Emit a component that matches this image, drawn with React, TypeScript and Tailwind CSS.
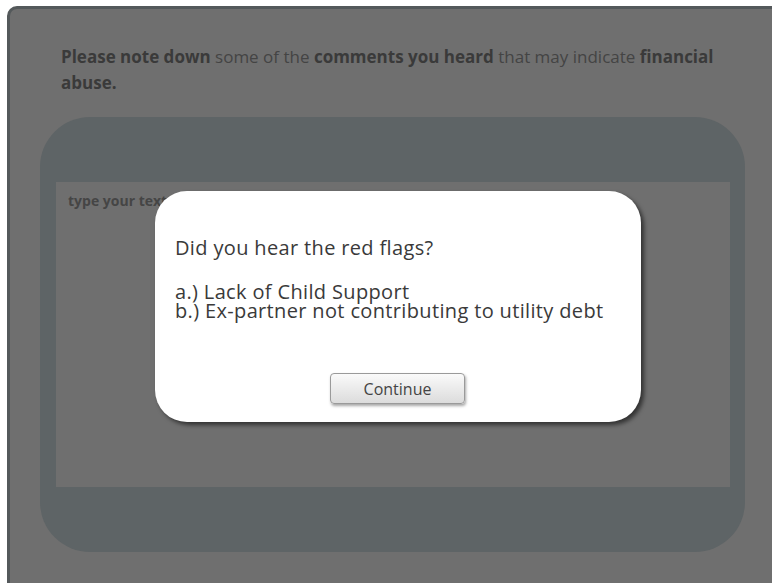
export default function App() {
  return (
    <div
      className="relative h-[583px] w-[772px] overflow-hidden bg-white pl-[7px] pt-[6px]"
      style={{ fontFamily: '"Open Sans", "Noto Sans", sans-serif' }}
    >
      {/* activity frame, dimmed behind the dialog */}
      <div className="h-[600px] w-[780px] rounded-tl-[10px] border-[3px] border-[#54595b] bg-[#6f6f6f] pl-[51px] pt-[35px]">
        <p className="w-[680px] text-[17px] leading-[26px] text-[#444]">
          <span className="font-bold text-[#3a3a3a]">Please note down</span> some of the{" "}
          <span className="font-bold text-[#3a3a3a]">comments you heard</span> that may indicate{" "}
          <span className="font-bold text-[#3a3a3a]">financial abuse.</span>
        </p>

        <div className="-ml-[21px] mt-[21px] h-[435px] w-[705px] rounded-[50px] bg-[#5e6466] px-[16px] pt-[65px]">
          <div className="h-[305px] w-[674px] bg-[#6f6f6f] px-[12px] pt-[6px]">
            <span className="text-[14px] font-bold text-[#454545]">type your text here</span>
          </div>
        </div>
      </div>

      {/* feedback dialog */}
      <div className="absolute left-[155px] top-[191px] flex h-[231px] w-[486px] flex-col rounded-[32px] bg-white px-[20px] pt-[47px] text-[20px] tracking-[0.35px] text-[#3a3a3a] shadow-[3px_3px_4px_rgba(0,0,0,0.55)]">
        <p className="leading-[20px]">Did you hear the red flags?</p>
        <p className="mt-[24px] leading-[19px]">a.) Lack of Child Support</p>
        <p className="leading-[19px]">b.) Ex-partner not contributing to utility debt</p>
        <div className="mt-[53px] flex">
          <button
            type="button"
            className="ml-[155px] h-[31px] w-[135px] rounded-[4px] border border-[#9a9a9a] bg-gradient-to-b from-[#fafafa] to-[#dcdcdc] text-[16px] tracking-normal text-[#444] shadow-[1px_2px_3px_rgba(0,0,0,0.35)]"
          >
            Continue
          </button>
        </div>
      </div>
    </div>
  );
}
